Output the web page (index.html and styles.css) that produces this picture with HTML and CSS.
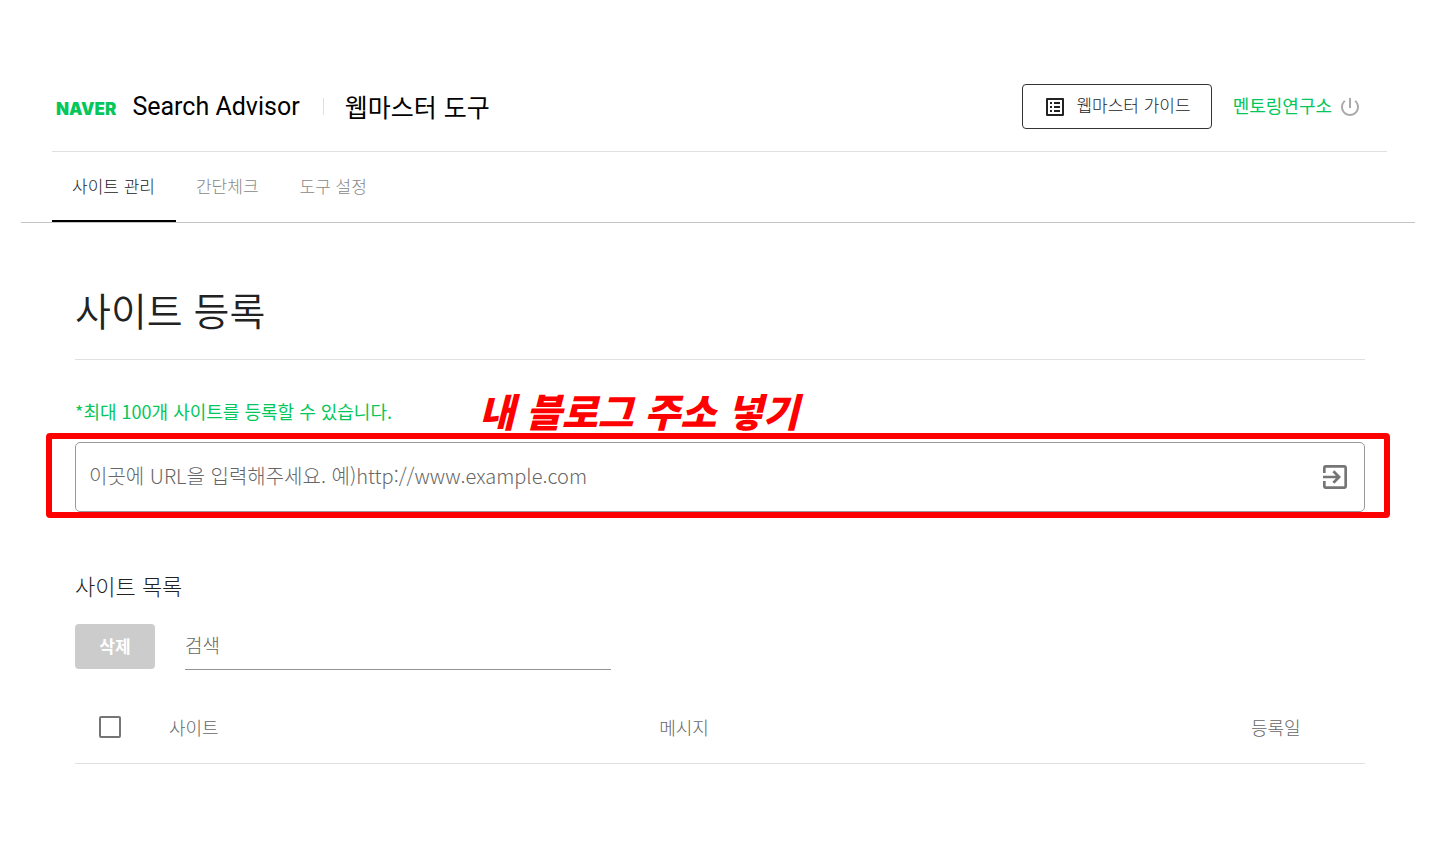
FILE: index.html
```
<!DOCTYPE html>
<html lang="ko">
<head>
    <meta charset="UTF-8">
    <meta name="viewport" content="width=device-width, initial-scale=1.0">
    <title>웹마스터 도구</title>
    <link rel="stylesheet" href="styles.css">
</head>
<body>
    <header class="header">
        <div class="title">
            <a href="#" class="logo">NAVER</a>
            <a href="#" class="brand">Search Advisor</a>
            <a href="#" class="tool-name">웹마스터 도구</a>
        </div>

        <button type="button" class="guide-btn">
            <svg viewBox="0 0 24 24" width="24" height="24" aria-hidden="true">
                <path d="M19 5v14H5V5h14m1.1-2H3.9c-.5 0-.9.4-.9.9v16.2c0 .4.4.9.9.9h16.2c.4 0 .9-.5.9-.9V3.9c0-.5-.5-.9-.9-.9zM11 7h6v2h-6V7zm0 4h6v2h-6v-2zm0 4h6v2h-6v-2zM7 7h2v2H7V7zm0 4h2v2H7v-2zm0 4h2v2H7v-2z"/>
            </svg>
            <span>웹마스터 가이드</span>
        </button>
        <a href="#" class="user">멘토링연구소</a>
        <button type="button" class="power-btn" aria-label="로그아웃">
            <svg viewBox="0 0 24 24" width="24" height="24" aria-hidden="true">
                <path d="M13 3h-2v10h2V3zm4.83 2.17l-1.42 1.42C17.99 7.86 19 9.81 19 12c0 3.87-3.13 7-7 7s-7-3.13-7-7c0-2.19 1.01-4.14 2.58-5.42L6.17 5.17C4.23 6.82 3 9.26 3 12c0 4.97 4.03 9 9 9s9-4.03 9-9c0-2.74-1.23-5.18-3.17-6.83z"/>
            </svg>
        </button>
    </header>

    <nav class="tabs">
        <a href="#" class="tab active">사이트 관리</a>
        <a href="#" class="tab">간단체크</a>
        <a href="#" class="tab">도구 설정</a>
    </nav>

    <main class="content">
        <h1>사이트 등록</h1>

        <p class="notice">*최대 100개 사이트를 등록할 수 있습니다.</p>

        <form class="url-form">
            <input type="text" class="url-input" aria-label="사이트 URL" placeholder="이곳에 URL을 입력해주세요. 예)http://www.example.com">
            <button type="submit" class="submit-btn" aria-label="등록">
                <svg viewBox="0 0 24 24" width="32" height="32" aria-hidden="true">
                    <path d="M10.09 15.59L11.5 17l5-5-5-5-1.41 1.41L12.67 11H3v2h9.67l-2.58 2.59zM19 3H5c-1.11 0-2 .9-2 2v4h2V5h14v14H5v-4H3v4c0 1.1.89 2 2 2h14c1.1 0 2-.9 2-2V5c0-1.1-.9-2-2-2z"/>
                </svg>
            </button>
            <span class="mark"></span>
            <span class="mark-text">내 블로그 주소 넣기</span>
        </form>

        <h2>사이트 목록</h2>

        <div class="toolbar">
            <button type="button" class="delete-btn" disabled>삭제</button>
            <input type="text" class="search-input" aria-label="검색" placeholder="검색">
        </div>

        <table class="site-table">
            <thead>
                <tr>
                    <th class="col-check"><input type="checkbox" aria-label="전체 선택"></th>
                    <th class="col-site">사이트</th>
                    <th>메시지</th>
                    <th class="col-date">등록일</th>
                </tr>
            </thead>
        </table>
    </main>
</body>
</html>
```
FILE: styles.css
```
* {
    margin: 0;
    padding: 0;
    box-sizing: border-box;
}

body {
    padding: 84px 21px 40px;
    background-color: #fff;
    color: #222;
    font-family: "Noto Sans CJK KR", sans-serif;
    font-weight: 300;
}

a {
    color: inherit;
    text-decoration: none;
}

button, input {
    font: inherit;
    color: inherit;
    background: none;
    border: none;
}

button {
    cursor: pointer;
}

svg {
    display: block;
    fill: currentColor;
}

/* header */
.header {
    display: flex;
    align-items: center;
    margin: 0 28px 0 31px;
    padding: 0 25px 22px 4px;
    border-bottom: 1px solid #e0e0e0;
}

.title {
    display: flex;
    align-items: baseline;
    padding-top: 2px;
    color: #000;
    font-weight: 400;
    line-height: 40px;
}

.logo {
    margin-right: 16px;
    color: #03c75a;
    font-family: Inter, sans-serif;
    font-size: 17px;
    font-weight: 900;
}

.brand {
    font-family: Roboto, sans-serif;
    font-size: 25px;
}

.tool-name {
    display: flex;
    align-items: center;
    font-size: 25px;
}

.tool-name::before {
    content: "";
    height: 17px;
    margin: 0 21px 0 23px;
    border-left: 1px solid #e0e0e0;
}

.guide-btn {
    display: flex;
    align-items: center;
    gap: 9px;
    height: 45px;
    margin-left: auto;
    padding: 0 20px;
    border: 1px solid #333;
    border-radius: 4px;
    font-size: 17px;
}

.guide-btn span, .user {
    padding-bottom: 4px;
}

.user {
    margin: 0 6px 0 21px;
    color: #03c75a;
    font-size: 18px;
    font-weight: 400;
}

.power-btn {
    color: #aaa;
}

/* tabs */
.tabs {
    display: flex;
    padding: 0 31px;
    border-bottom: 1px solid #c4c4c4;
}

.tab {
    padding: 0 21px 0 20px;
    border-bottom: 2px solid transparent;
    color: #888;
    font-size: 17px;
    line-height: 68px;
}

.tab.active {
    border-color: #000;
    color: #222;
}

/* content */
.content {
    padding: 56px 29px 0 33px;
    margin: 0 21px;
}

h1 {
    padding-bottom: 20px;
    border-bottom: 1px solid #e0e0e0;
    font-size: 39px;
    font-weight: 350;
    line-height: 60px;
}

.notice {
    margin: 37px 0 17px;
    color: #03c75a;
    font-size: 18px;
    font-weight: 400;
    line-height: 28px;
}

.url-form {
    position: relative;
    display: flex;
    align-items: center;
    height: 70px;
    padding: 0 13px;
    border: 1px solid #999;
    border-radius: 5px;
}

.url-input {
    flex: 1;
    padding-bottom: 4px;
    font-size: 20px;
}

.submit-btn {
    color: #757575;
}

input::placeholder {
    color: #666;
    opacity: 1;
}

/* red highlight around the url field */
.mark {
    position: absolute;
    inset: -10px -26px -7px -30px;
    border: 6px solid #f00;
    border-radius: 4px;
    pointer-events: none;
}

.mark-text {
    position: absolute;
    left: 403px;
    bottom: 71px;
    color: #f00;
    font-size: 39px;
    font-style: italic;
    font-weight: 900;
    line-height: 60px;
    white-space: nowrap;
}

h2 {
    margin: 57px 0 23px;
    font-size: 22px;
    font-weight: 300;
    line-height: 32px;
}

.toolbar {
    display: flex;
    gap: 30px;
}

.delete-btn {
    width: 80px;
    height: 45px;
    padding-bottom: 2px;
    border-radius: 4px;
    background-color: #ccc;
    color: #fff;
    font-size: 17px;
    font-weight: 700;
    cursor: default;
}

.search-input {
    width: 33%;
    height: 46px;
    padding-bottom: 4px;
    border-bottom: 1px solid #949494;
    font-size: 19px;
}

.site-table {
    width: 100%;
    margin-top: 22px;
    border-collapse: collapse;
    table-layout: fixed;
}

.site-table th {
    height: 71px;
    padding: 0 24px;
    border-bottom: 1px solid #e0e0e0;
    color: #666;
    font-size: 18px;
    font-weight: 300;
    text-align: left;
}

.col-check {
    width: 70px;
}

.col-site {
    width: 38%;
}

.col-date {
    width: 138px;
}

input[type="checkbox"] {
    display: block;
    appearance: none;
    width: 22px;
    height: 22px;
    border: 2px solid #757575;
    border-radius: 2px;
}
```
